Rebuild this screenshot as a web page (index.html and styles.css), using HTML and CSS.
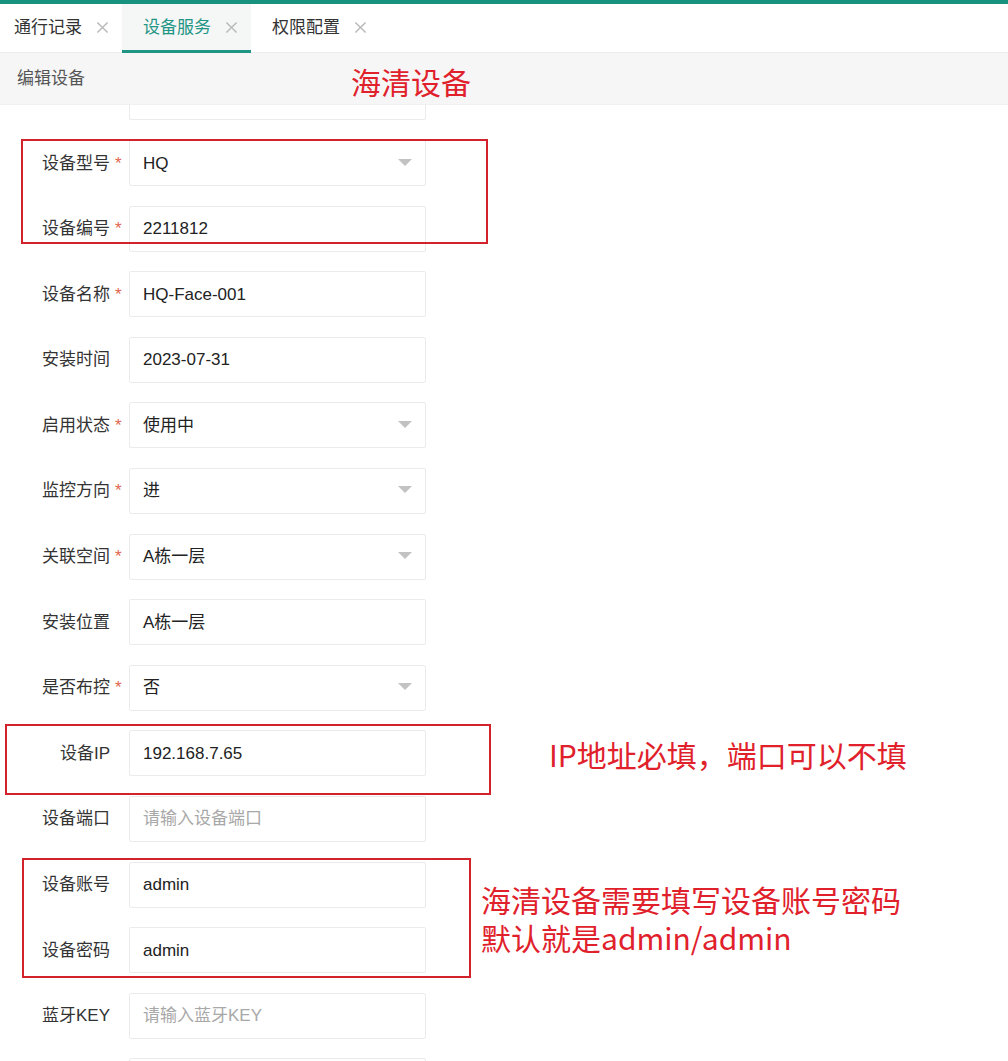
FILE: index.html
```html
<!DOCTYPE html>
<html lang="zh-CN">
<head>
<meta charset="utf-8">
<title>编辑设备</title>
<link rel="stylesheet" href="styles.css">
</head>
<body>
<div class="topline"></div>
<div class="tabs">
  <div class="tab first"><span class="tab-text">通行记录</span><svg class="tab-close" viewBox="0 0 14 14"><path d="M1.5 1.5L12.5 12.5M12.5 1.5L1.5 12.5"/></svg></div>
  <div class="tab active"><span class="tab-text">设备服务</span><svg class="tab-close" viewBox="0 0 14 14"><path d="M1.5 1.5L12.5 12.5M12.5 1.5L1.5 12.5"/></svg></div>
  <div class="tab"><span class="tab-text">权限配置</span><svg class="tab-close" viewBox="0 0 14 14"><path d="M1.5 1.5L12.5 12.5M12.5 1.5L1.5 12.5"/></svg></div>
</div>
<div class="header"><span class="header-text">编辑设备</span></div>
<div class="form-wrap">
  <div class="form">
    <div class="row"><div class="label"><span class="lt"></span><span class="star"></span></div><div class="field"></div></div>
    <div class="row"><div class="label"><span class="lt">设备型号</span><span class="star">*</span></div><div class="field"><span class="val">HQ</span><i class="caret"></i></div></div>
    <div class="row"><div class="label"><span class="lt">设备编号</span><span class="star">*</span></div><div class="field"><span class="val">2211812</span></div></div>
    <div class="row"><div class="label"><span class="lt">设备名称</span><span class="star">*</span></div><div class="field"><span class="val">HQ-Face-001</span></div></div>
    <div class="row"><div class="label"><span class="lt">安装时间</span><span class="star"></span></div><div class="field"><span class="val">2023-07-31</span></div></div>
    <div class="row"><div class="label"><span class="lt">启用状态</span><span class="star">*</span></div><div class="field"><span class="val">使用中</span><i class="caret"></i></div></div>
    <div class="row"><div class="label"><span class="lt">监控方向</span><span class="star">*</span></div><div class="field"><span class="val">进</span><i class="caret"></i></div></div>
    <div class="row"><div class="label"><span class="lt">关联空间</span><span class="star">*</span></div><div class="field"><span class="val">A栋一层</span><i class="caret"></i></div></div>
    <div class="row"><div class="label"><span class="lt">安装位置</span><span class="star"></span></div><div class="field"><span class="val">A栋一层</span></div></div>
    <div class="row"><div class="label"><span class="lt">是否布控</span><span class="star">*</span></div><div class="field"><span class="val">否</span><i class="caret"></i></div></div>
    <div class="row"><div class="label"><span class="lt">设备IP</span><span class="star"></span></div><div class="field"><span class="val">192.168.7.65</span></div></div>
    <div class="row"><div class="label"><span class="lt">设备端口</span><span class="star"></span></div><div class="field"><span class="val ph">请输入设备端口</span></div></div>
    <div class="row"><div class="label"><span class="lt">设备账号</span><span class="star"></span></div><div class="field"><span class="val">admin</span></div></div>
    <div class="row"><div class="label"><span class="lt">设备密码</span><span class="star"></span></div><div class="field"><span class="val">admin</span></div></div>
    <div class="row"><div class="label"><span class="lt">蓝牙KEY</span><span class="star"></span></div><div class="field"><span class="val ph">请输入蓝牙KEY</span></div></div>
    <div class="row"><div class="label"><span class="lt"></span><span class="star"></span></div><div class="field"></div></div>
  </div>
</div>

<div class="box box1"></div>
<div class="box box2"></div>
<div class="box box3"></div>
<div class="note note1">海清设备</div>
<div class="note note2">IP地址必填，端口可以不填</div>
<div class="note note3a">海清设备需要填写设备账号密码</div>
<div class="note note3b">默认就是admin/admin</div>
</body>
</html>
```
FILE: styles.css
```css
html, body {
  margin: 0;
  padding: 0;
  background: #ffffff;
}
body {
  font-family: "Liberation Sans", "Noto Sans CJK SC", sans-serif;
  color: #333333;
  width: 1008px;
  height: 1061px;
  overflow: hidden;
  position: relative;
}
.topline {
  height: 4px;
  background: #17927f;
}
.tabs {
  display: flex;
  height: 49px;
  background: #ffffff;
  border-bottom: 1px solid #ececec;
  box-sizing: border-box;
}
.tab {
  display: flex;
  align-items: center;
  padding: 1px 13px 0 21px;
  font-size: 17px;
  color: #333333;
  border-bottom: 3px solid transparent;
  box-sizing: border-box;
  height: 49px;
}
.tab.first {
  margin-left: -7px;
}
.tab.active {
  background: #f5f6f6;
  color: #1f9585;
  border-bottom-color: #1f9585;
}
.tab-text {
  width: 68px;
  white-space: nowrap;
  line-height: 1;
}
.tab-close {
  margin-left: 14px;
  width: 13px;
  height: 13px;
  fill: none;
  stroke: #b8b8b8;
  stroke-width: 1.5;
}
.header {
  height: 52px;
  background: #f6f6f6;
  display: flex;
  align-items: center;
  padding-left: 17px;
  font-size: 17px;
  color: #555555;
  border-bottom: 1px solid #f0f0f0;
  box-sizing: border-box;
}
.header-text {
  line-height: 1;
}
.form-wrap {
  height: 956px;
  overflow: hidden;
}
.form {
  margin-top: -30.6px;
}
.row {
  display: flex;
  align-items: center;
  height: 46px;
  margin-bottom: 19.6px;
}
.label {
  width: 129px;
  display: flex;
  align-items: center;
  flex-shrink: 0;
}
.lt {
  width: 110px;
  text-align: right;
  font-size: 17px;
  line-height: 1;
  color: #333333;
  white-space: nowrap;
}
.star {
  width: 19px;
  padding-left: 5px;
  box-sizing: border-box;
  color: #e0664f;
  font-size: 17px;
  line-height: 1;
  height: 17px;
}
.field {
  width: 297px;
  height: 46px;
  box-sizing: border-box;
  border: 1px solid #ebebeb;
  border-radius: 2px;
  display: flex;
  align-items: center;
  justify-content: space-between;
  padding: 0 13px 0 13px;
  font-size: 17px;
  color: #222222;
  background: #ffffff;
}
.val {
  line-height: 1;
}
.ph {
  color: #a8a8a8;
}
.caret {
  width: 0;
  height: 0;
  border-left: 7px solid transparent;
  border-right: 7px solid transparent;
  border-top: 7px solid #c2c2c2;
  margin-top: -2px;
}
.box {
  position: absolute;
  border: 2px solid #d2232c;
  box-sizing: border-box;
}
.box1 {
  left: 21px;
  top: 139px;
  width: 467px;
  height: 105px;
}
.box2 {
  left: 5px;
  top: 724px;
  width: 486px;
  height: 71px;
}
.box3 {
  left: 22px;
  top: 858px;
  width: 449px;
  height: 120px;
}
.note {
  position: absolute;
  font-family: "Noto Sans CJK SC", sans-serif;
  font-size: 30px;
  line-height: 36px;
  color: #e0212b;
  white-space: nowrap;
}
.note1 {
  left: 351px;
  top: 63px;
}
.note2 {
  left: 549px;
  top: 736px;
}
.note3a {
  left: 481px;
  top: 881px;
}
.note3b {
  left: 481px;
  top: 919px;
}
```
